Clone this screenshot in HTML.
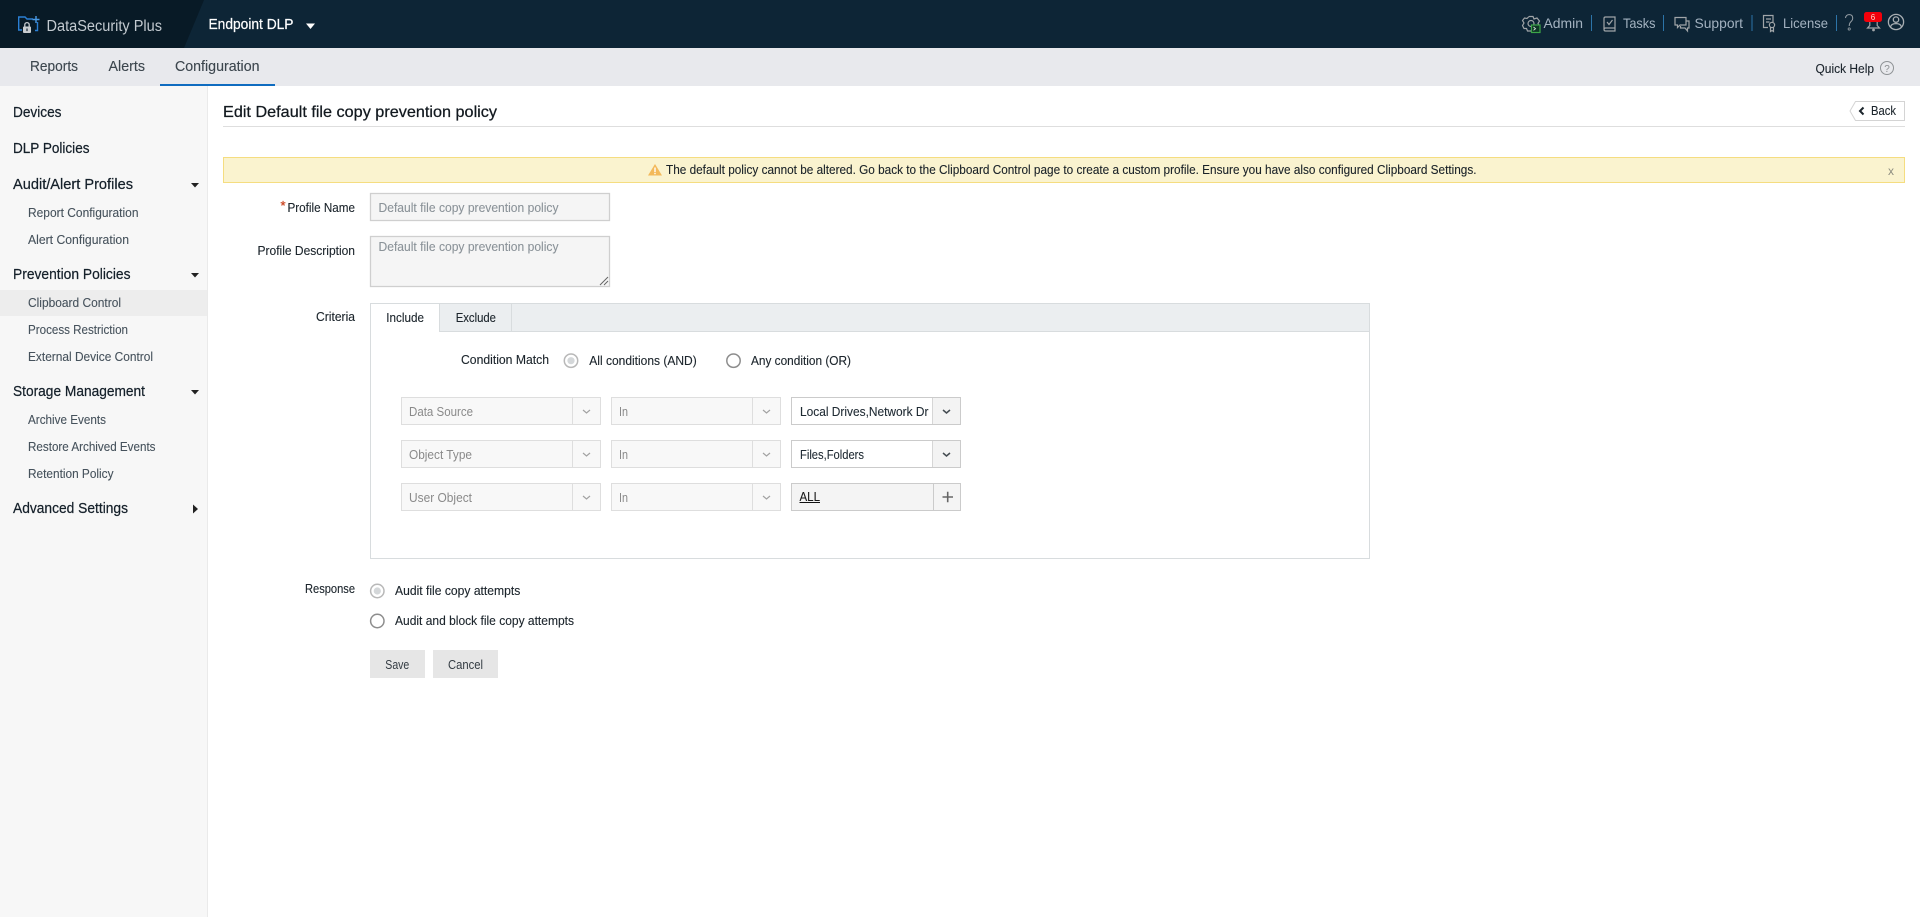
<!DOCTYPE html>
<html lang="en">
<head>
<meta charset="utf-8">
<title>Edit Default file copy prevention policy</title>
<style>
html,body{margin:0;padding:0;background:#fff;width:1920px;height:917px;overflow:hidden}
svg{display:block}
text{font-family:"Liberation Sans",Arial,sans-serif;white-space:pre}
.nav{font-size:14.5px;fill:#3c464e;stroke:#3c464e;stroke-width:.12}
.h{font-size:14.5px;fill:#15202a;stroke:#15202a;stroke-width:.22}
.s{font-size:12.5px;fill:#46525c;stroke:#46525c;stroke-width:.1}
.l{font-size:12.5px;fill:#1c252c;stroke:#1c252c;stroke-width:.12}
.ph{font-size:12.5px;fill:#8b9399;stroke:#8b9399;stroke-width:.1}
.d{font-size:12.5px;fill:#8a8a8a}
.v{font-size:12.5px;fill:#1f2a33;stroke:#1f2a33;stroke-width:.1}
.top{font-size:14px;fill:#a3b2c0}
.ic{fill:none;stroke:#a0a5a8;stroke-width:1.2}
.box{fill:#f8f8f8;stroke:#dedede;stroke-width:1}
.val{stroke:#cbcbcb;stroke-width:1}
.chev{fill:none;stroke:#a2a2a2;stroke-width:1.2}
.chevd{fill:none;stroke:#454c52;stroke-width:1.5}
.cr{fill:#222}
</style>
</head>
<body>
<svg width="1920" height="917" viewBox="0 0 1920 917" xmlns="http://www.w3.org/2000/svg">
<!-- top bar -->
<rect width="1920" height="48" fill="#0d2536"/>
<polygon points="0,0 204,0 184,48 0,48" fill="#081a26"/>
<g fill="none" stroke="#2a7fd4" stroke-width="1.4">
  <path d="M22 30H18.7V17H25L27 19H33"/>
  <path d="M37.5 22V30.5H35"/>
  <path d="M36 16V23M32.5 19.5H39.5" stroke="#4a9be6"/>
</g>
<rect x="23" y="26.5" width="8" height="6.5" rx="1" fill="#c9cdd0"/>
<path d="M24.8 26.5V24.8A2.2 2.2 0 0 1 29.2 24.8V26.5" fill="none" stroke="#c9cdd0" stroke-width="1.3"/>
<rect x="26.3" y="28.5" width="1.4" height="2.6" fill="#33404a"/>
<text x="46.5" y="31" font-size="15.5" fill="#c3cad0" textLength="115.5" lengthAdjust="spacingAndGlyphs">DataSecurity Plus</text>
<text x="208.5" y="29" font-size="14.5" fill="#fff" textLength="85" lengthAdjust="spacingAndGlyphs" stroke="#fff" stroke-width=".2">Endpoint DLP</text>
<polygon points="306,23.5 315,23.5 310.5,29" fill="#fff"/>

<!-- admin -->
<g class="ic" stroke-width="1">
  <path d="M1529 16.5L1533 16.5L1534 19L1537 18L1539.5 21L1538 23.5L1539.5 26" />
  <path d="M1532 31H1527.5L1526.5 28.5L1524 28.5L1522.5 25.5L1524 23L1522.5 20.5L1524.5 18L1527 18.5L1529 16.5"/>
  <circle cx="1531" cy="23.5" r="3"/>
</g>
<rect x="1531.5" y="25" width="8.5" height="7.5" fill="#0e3526" stroke="#3ca548" stroke-width="1.2"/>
<path d="M1533.5 27L1535.5 28.7L1533.5 30.3" fill="none" stroke="#d5e6d8" stroke-width=".9"/>
<text class="top" x="1543.5" y="28" textLength="39.5" lengthAdjust="spacingAndGlyphs">Admin</text>
<rect x="1591" y="15" width="1" height="16" fill="#2c74a8"/>
<!-- tasks -->
<g class="ic">
  <path d="M1604 29V18.5Q1604 17 1605.5 17H1615V28H1605.5Q1604 28 1604 29.5Q1604 31 1605.5 31H1615V28"/>
  <path d="M1607 22L1609 24.5L1612.5 20"/>
</g>
<text class="top" x="1623" y="28" textLength="32.5" lengthAdjust="spacingAndGlyphs">Tasks</text>
<rect x="1663" y="15" width="1" height="16" fill="#2c74a8"/>
<!-- support -->
<g class="ic">
  <path d="M1675 17.5H1686V25H1680L1677.5 27.5V25H1675Z"/>
  <path d="M1686.5 21H1689V28H1687.5V31L1685 28H1680.5V26"/>
</g>
<text class="top" x="1694.5" y="28" textLength="48.5" lengthAdjust="spacingAndGlyphs">Support</text>
<rect x="1751.5" y="15" width="1" height="16" fill="#2c74a8"/>
<!-- license -->
<g class="ic">
  <path d="M1768 27.5H1763.5V15.5H1773V22"/>
  <path d="M1766 19H1771M1766 22H1769.5"/>
  <circle cx="1772" cy="25" r="2.6"/>
  <path d="M1770.5 27.5V31.5L1772 30.5L1773.5 31.5V27.5"/>
</g>
<text class="top" x="1783" y="28" textLength="45" lengthAdjust="spacingAndGlyphs">License</text>
<rect x="1836" y="15" width="1" height="16" fill="#2c74a8"/>
<!-- ? -->
<path d="M1845.5 18Q1846 14.6 1849.2 14.6Q1852.5 14.6 1852.7 17.8Q1852.8 20 1851 21.6Q1849.3 23 1849.2 26" fill="none" stroke="#9aa2a8" stroke-width="1"/>
<circle cx="1849.2" cy="29" r="1.1" fill="none" stroke="#9aa2a8" stroke-width=".8"/>
<!-- bell -->
<path d="M1869.8 22V25.5L1867.5 28H1879.5L1877.2 25.5V22" fill="none" stroke="#a0a5a8" stroke-width="1.2"/>
<circle cx="1873.5" cy="30" r="1.4" fill="#a0a5a8"/>
<rect x="1864" y="12" width="18" height="10" rx="2.5" fill="#f3000a"/>
<text x="1873" y="20" font-size="8" fill="#ffd7c8" text-anchor="middle">6</text>
<!-- user -->
<g fill="none" stroke="#a8aeb2" stroke-width="1.3">
  <circle cx="1896" cy="22" r="7.6"/>
  <circle cx="1896" cy="19.6" r="2.7"/>
  <path d="M1890.5 27Q1891 23.6 1896 23.6Q1901 23.6 1901.5 27"/>
</g>

<!-- sub nav -->
<rect y="48" width="1920" height="38" fill="#e8e9ed"/>
<text class="nav" x="30" y="71" textLength="48" lengthAdjust="spacingAndGlyphs">Reports</text>
<text class="nav" x="108.5" y="71" textLength="36.5" lengthAdjust="spacingAndGlyphs">Alerts</text>
<text class="nav" x="175" y="71" textLength="84.5" lengthAdjust="spacingAndGlyphs">Configuration</text>
<rect x="160" y="84" width="115" height="2" fill="#0f6cc0"/>
<text x="1815.5" y="73" font-size="13" fill="#1b242c" stroke="#1b242c" stroke-width=".1" textLength="58.5" lengthAdjust="spacingAndGlyphs">Quick Help</text>
<circle cx="1887" cy="68" r="6.5" fill="none" stroke="#8f9396" stroke-width="1"/>
<text x="1887" y="72" font-size="10" fill="#8a8e91" text-anchor="middle">?</text>

<!-- sidebar -->
<rect y="86" width="207" height="831" fill="#f7f7f7"/>
<rect x="207" y="86" width="1" height="831" fill="#eaeaea"/>
<rect y="290" width="207" height="26" fill="#ededed"/>
<text class="h" x="13" y="117" textLength="48.5" lengthAdjust="spacingAndGlyphs">Devices</text>
<text class="h" x="13" y="153" textLength="76.5" lengthAdjust="spacingAndGlyphs">DLP Policies</text>
<text class="h" x="13" y="189" textLength="120" lengthAdjust="spacingAndGlyphs">Audit/Alert Profiles</text>
<polygon class="cr" points="191,183 199,183 195,187.5"/>
<text class="s" x="28" y="217" textLength="110.5" lengthAdjust="spacingAndGlyphs">Report Configuration</text>
<text class="s" x="28" y="244" textLength="101" lengthAdjust="spacingAndGlyphs">Alert Configuration</text>
<text class="h" x="13" y="279" textLength="117.5" lengthAdjust="spacingAndGlyphs">Prevention Policies</text>
<polygon class="cr" points="191,273 199,273 195,277.5"/>
<text class="s" x="28" y="307" textLength="93" lengthAdjust="spacingAndGlyphs">Clipboard Control</text>
<text class="s" x="28" y="334" textLength="100" lengthAdjust="spacingAndGlyphs">Process Restriction</text>
<text class="s" x="28" y="361" textLength="125" lengthAdjust="spacingAndGlyphs">External Device Control</text>
<text class="h" x="13" y="396" textLength="132" lengthAdjust="spacingAndGlyphs">Storage Management</text>
<polygon class="cr" points="191,390 199,390 195,394.5"/>
<text class="s" x="28" y="424" textLength="78" lengthAdjust="spacingAndGlyphs">Archive Events</text>
<text class="s" x="28" y="451" textLength="127.5" lengthAdjust="spacingAndGlyphs">Restore Archived Events</text>
<text class="s" x="28" y="478" textLength="85.5" lengthAdjust="spacingAndGlyphs">Retention Policy</text>
<text class="h" x="13" y="513" textLength="115" lengthAdjust="spacingAndGlyphs">Advanced Settings</text>
<polygon class="cr" points="193,504.5 193,513.5 198,509"/>

<!-- title -->
<text x="223" y="117" font-size="16" fill="#12191f" stroke="#12191f" stroke-width=".25" textLength="274" lengthAdjust="spacingAndGlyphs">Edit Default file copy prevention policy</text>
<rect x="223" y="126" width="1682" height="1" fill="#dedede"/>
<!-- back -->
<path d="M1855.5 101.5H1904.5V120.5H1855.5L1850 111Z" fill="#fff" stroke="#d4d4d4"/>
<path d="M1863.5 107.5L1860 111L1863.5 114.5" fill="none" stroke="#1c252c" stroke-width="2"/>
<text x="1871" y="115" font-size="12.5" fill="#1c252c" stroke="#1c252c" stroke-width=".1" textLength="25" lengthAdjust="spacingAndGlyphs">Back</text>

<!-- banner -->
<rect x="223.5" y="157.5" width="1681" height="25" fill="#faf3cf" stroke="#f5dd80"/>
<polygon points="655,164 662,175.5 648,175.5" fill="#f3b95a"/>
<rect x="654.3" y="167.5" width="1.4" height="4.5" fill="#fff"/>
<rect x="654.3" y="172.8" width="1.4" height="1.4" fill="#fff"/>
<text x="666" y="174" font-size="12.5" fill="#1a2228" stroke="#1a2228" stroke-width=".1" textLength="810.5" lengthAdjust="spacingAndGlyphs">The default policy cannot be altered. Go back to the Clipboard Control page to create a custom profile. Ensure you have also configured Clipboard Settings.</text>
<text x="1888" y="175" font-size="12" fill="#8d8d80">x</text>

<!-- profile name -->
<text x="280.5" y="210" font-size="13" fill="#c9431f" stroke="#c9431f" stroke-width=".3">*</text>
<text class="l" x="287.5" y="212" textLength="67.5" lengthAdjust="spacingAndGlyphs">Profile Name</text>
<rect x="370.5" y="193.5" width="239" height="27" fill="#f5f5f5" stroke="#cfcfcf" stroke-width="1.3"/>
<text class="ph" x="378.5" y="212" textLength="180" lengthAdjust="spacingAndGlyphs">Default file copy prevention policy</text>

<text class="l" x="257.5" y="255" textLength="97.5" lengthAdjust="spacingAndGlyphs">Profile Description</text>
<rect x="370.5" y="236.5" width="239" height="50" fill="#f5f5f5" stroke="#cfcfcf" stroke-width="1.3"/>
<text class="ph" x="378.5" y="251" textLength="180" lengthAdjust="spacingAndGlyphs">Default file copy prevention policy</text>
<path d="M600 285L608 277M604 285L608 281" stroke="#666" stroke-width="1" fill="none"/>

<!-- criteria -->
<text class="l" x="316" y="321" textLength="39" lengthAdjust="spacingAndGlyphs">Criteria</text>
<rect x="370.5" y="303.5" width="999" height="255" fill="#fff" stroke="#d8dcde"/>
<rect x="371" y="304" width="998" height="27.5" fill="#ebeef0"/>
<rect x="371" y="331" width="998" height="1" fill="#d8dcde"/>
<rect x="371" y="304" width="68" height="28" fill="#fff"/>
<rect x="439" y="304" width="1" height="28" fill="#d8dcde"/>
<rect x="511" y="304" width="1" height="27" fill="#d8dcde"/>
<text class="l" x="386.3" y="322" textLength="37.7" lengthAdjust="spacingAndGlyphs">Include</text>
<text class="l" x="455.7" y="322" textLength="40.3" lengthAdjust="spacingAndGlyphs">Exclude</text>

<text class="l" x="461" y="364" textLength="88" lengthAdjust="spacingAndGlyphs">Condition Match</text>
<circle cx="571" cy="360.7" r="6.7" fill="#fff" stroke="#b8b8b8" stroke-width="1.5"/>
<circle cx="571" cy="360.7" r="3.6" fill="#d4d7d9"/>
<text class="l" x="589.3" y="365" textLength="107.4" lengthAdjust="spacingAndGlyphs">All conditions (AND)</text>
<circle cx="733.5" cy="360.7" r="6.7" fill="#fff" stroke="#8d8d8d" stroke-width="1.5"/>
<text class="l" x="751" y="365" textLength="100" lengthAdjust="spacingAndGlyphs">Any condition (OR)</text>

<!-- row 1 -->
<rect class="box" x="401.5" y="397.5" width="199" height="27"/>
<rect x="572" y="398" width="1" height="26" fill="#dedede"/>
<text class="d" x="409" y="416" textLength="64" lengthAdjust="spacingAndGlyphs">Data Source</text>
<path class="chev" d="M583 410L586.5 413L590 410"/>
<rect class="box" x="611.5" y="397.5" width="169" height="27"/>
<rect x="752" y="398" width="1" height="26" fill="#dedede"/>
<text class="d" x="619" y="416" textLength="9" lengthAdjust="spacingAndGlyphs">In</text>
<path class="chev" d="M763 410L766.5 413L770 410"/>
<rect class="val" x="791.5" y="397.5" width="169" height="27" fill="#fff"/>
<rect x="933" y="398" width="27" height="26" fill="#f3f3f3"/>
<rect x="932" y="398" width="1" height="26" fill="#d6d6d6"/>
<text class="v" x="800" y="416" textLength="128.5" lengthAdjust="spacingAndGlyphs">Local Drives,Network Dr</text>
<path class="chevd" d="M943 410L946.5 413L950 410"/>

<!-- row 2 -->
<rect class="box" x="401.5" y="440.5" width="199" height="27"/>
<rect x="572" y="441" width="1" height="26" fill="#dedede"/>
<text class="d" x="409" y="459" textLength="63" lengthAdjust="spacingAndGlyphs">Object Type</text>
<path class="chev" d="M583 453L586.5 456L590 453"/>
<rect class="box" x="611.5" y="440.5" width="169" height="27"/>
<rect x="752" y="441" width="1" height="26" fill="#dedede"/>
<text class="d" x="619" y="459" textLength="9" lengthAdjust="spacingAndGlyphs">In</text>
<path class="chev" d="M763 453L766.5 456L770 453"/>
<rect class="val" x="791.5" y="440.5" width="169" height="27" fill="#fff"/>
<rect x="933" y="441" width="27" height="26" fill="#f3f3f3"/>
<rect x="932" y="441" width="1" height="26" fill="#d6d6d6"/>
<text class="v" x="800" y="459" textLength="64" lengthAdjust="spacingAndGlyphs">Files,Folders</text>
<path class="chevd" d="M943 453L946.5 456L950 453"/>

<!-- row 3 -->
<rect class="box" x="401.5" y="483.5" width="199" height="27"/>
<rect x="572" y="484" width="1" height="26" fill="#dedede"/>
<text class="d" x="409" y="502" textLength="63" lengthAdjust="spacingAndGlyphs">User Object</text>
<path class="chev" d="M583 496L586.5 499L590 496"/>
<rect class="box" x="611.5" y="483.5" width="169" height="27"/>
<rect x="752" y="484" width="1" height="26" fill="#dedede"/>
<text class="d" x="619" y="502" textLength="9" lengthAdjust="spacingAndGlyphs">In</text>
<path class="chev" d="M763 496L766.5 499L770 496"/>
<rect class="val" x="791.5" y="483.5" width="169" height="27" fill="#f4f4f4"/>
<rect x="933" y="484" width="1" height="26" fill="#cbcbcb"/>
<text x="799.5" y="501" font-size="12.5" fill="#1a1a1a" stroke="#1a1a1a" stroke-width=".1" textLength="20.5" lengthAdjust="spacingAndGlyphs">ALL</text>
<rect x="799.5" y="502" width="20.5" height="1" fill="#111"/>
<path d="M942.5 497H953M947.7 491.8V502.2" stroke="#666" stroke-width="1.6" fill="none"/>

<!-- response -->
<text class="l" x="305" y="593" textLength="50" lengthAdjust="spacingAndGlyphs">Response</text>
<circle cx="377.3" cy="591" r="6.7" fill="#fff" stroke="#b8b8b8" stroke-width="1.5"/>
<circle cx="377.3" cy="591" r="3.6" fill="#d4d7d9"/>
<text class="l" x="395" y="595" textLength="125.3" lengthAdjust="spacingAndGlyphs">Audit file copy attempts</text>
<circle cx="377.3" cy="621" r="6.7" fill="#fff" stroke="#8d8d8d" stroke-width="1.5"/>
<text class="l" x="395" y="625" textLength="179" lengthAdjust="spacingAndGlyphs">Audit and block file copy attempts</text>

<rect x="370" y="650" width="55" height="28" fill="#e6e6e6"/>
<text x="385.3" y="669" font-size="12.5" fill="#333b42" textLength="24" lengthAdjust="spacingAndGlyphs">Save</text>
<rect x="433" y="650" width="65" height="28" fill="#e6e6e6"/>
<text x="448" y="669" font-size="12.5" fill="#333b42" textLength="35" lengthAdjust="spacingAndGlyphs">Cancel</text>
</svg>
</body>
</html>
